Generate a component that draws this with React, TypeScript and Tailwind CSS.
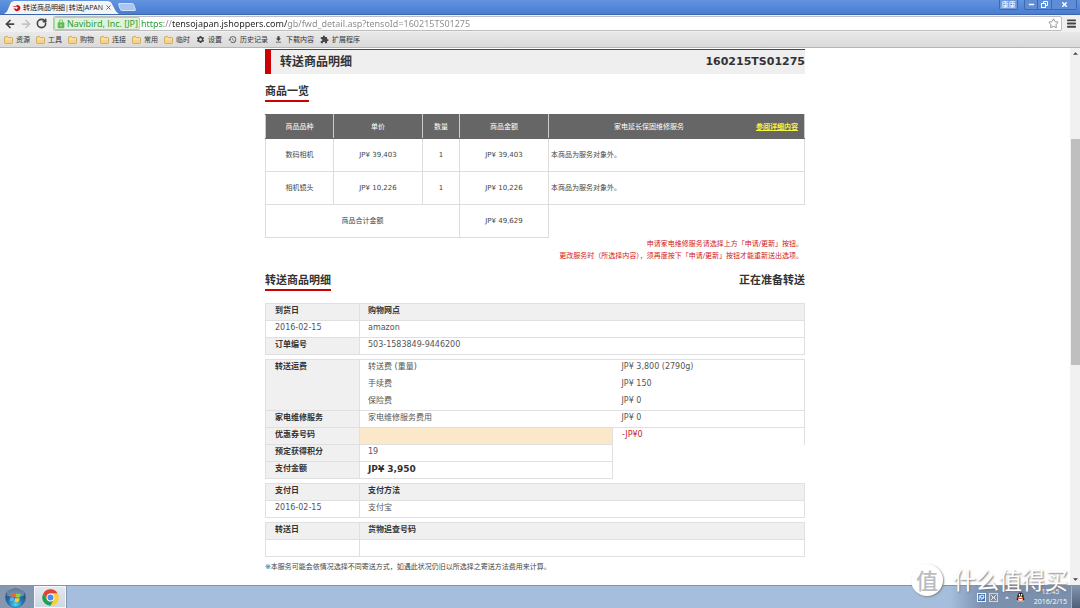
import React from "react";
import { ArrowLeft, ArrowRight, RotateCw, Star, Menu, X, Minus } from "lucide-react";
import { MdSettings, MdHistory, MdFileDownload, MdExtension, MdLock } from "react-icons/md";

const products = [
  { name: "数码相机", price: "JP¥ 39,403", count: "1", total: "JP¥ 39,403", note: "本商品为服务对象外。" },
  { name: "相机镜头", price: "JP¥ 10,226", count: "1", total: "JP¥ 10,226", note: "本商品为服务对象外。" },
];

function FolderIcon() {
  return (
    <svg viewBox="0 0 18 16" className="h-2 w-[9px]" aria-hidden="true">
      <path d="M1 3 Q1 1 3 1 H7 L9 3 H15 Q17 3 17 5 V13 Q17 15 15 15 H3 Q1 15 1 13 Z" fill="#f7d483" stroke="#c79a48" strokeWidth="1.4" />
      <path d="M2 6 H16" stroke="#fdf0c4" strokeWidth="1.6" />
    </svg>
  );
}

const bookmarks = [
  { label: "资源", icon: <FolderIcon /> },
  { label: "工具", icon: <FolderIcon /> },
  { label: "购物", icon: <FolderIcon /> },
  { label: "连接", icon: <FolderIcon /> },
  { label: "常用", icon: <FolderIcon /> },
  { label: "临时", icon: <FolderIcon /> },
  { label: "设置", icon: <MdSettings className="size-[9px] text-[#444]" /> },
  { label: "历史记录", icon: <MdHistory className="size-[9px] text-[#555]" /> },
  { label: "下载内容", icon: <MdFileDownload className="size-[9px] text-[#444]" /> },
  { label: "扩展程序", icon: <MdExtension className="size-[9px] text-[#444]" /> },
];

function SiteIcon() {
  return (
    <svg viewBox="0 0 24 20" className="h-2 w-[9px]" aria-hidden="true">
      <path d="M1 5 L10 5 Q13 0 19 3 Q25 8 21 14 Q16 21 9 17 L4 11 L10 11 L12 13 L16 9 L12 6 L8 8 Z" fill="#d3131b" />
    </svg>
  );
}

function RestoreIcon() {
  return (
    <svg viewBox="0 0 14 14" className="size-[7px]" fill="none" stroke="white" strokeWidth="2" aria-hidden="true">
      <path d="M5 4 V1 H13 V9 H10" />
      <rect x="1" y="5" width="8" height="8" />
    </svg>
  );
}

function TitleBar() {
  return (
    <header className="flex h-3.5 shrink-0 justify-between bg-linear-to-b from-[#6394df] to-[#4a7cd2]">
      <div className="flex pl-1">
        <div className="mt-px flex h-[13px] w-[115px] items-center bg-[#f4f4f4] pl-2 [clip-path:polygon(0_100%,3px_80%,7px_10%,10px_0,104px_0,107px_10%,112px_80%,100%_100%)]">
          <SiteIcon />
          <span className="ml-0.5 whitespace-nowrap text-[7px] leading-3 text-[#222]">转送商品明细|转送JAPAN</span>
          <button aria-label="关闭标签页" className="ml-0.5">
            <X className="size-[7px] text-[#555]" strokeWidth={3} />
          </button>
        </div>
        <button aria-label="新标签页" className="mt-[3px] h-2 w-4 skew-x-[20deg] rounded-xs border border-[#cfe0f7] bg-[#a9c7ee]" />
      </div>
      <div className="flex h-[10px] items-stretch gap-1.5 pr-[3px] text-white">
        <button className="w-[19px] rounded-b-xs border border-t-0 border-[#4068a8] bg-[#7099d8] text-center text-[7px] leading-2">康康</button>
        <div className="flex divide-x divide-[#4068a8] rounded-b-xs border border-t-0 border-[#4068a8] bg-[#5f8cd6]">
          <button aria-label="最小化" className="grid w-[13px] place-items-center"><Minus className="size-[7px]" strokeWidth={5} /></button>
          <button aria-label="还原" className="grid w-3.5 place-items-center"><RestoreIcon /></button>
          <button aria-label="关闭" className="grid w-6 place-items-center"><X className="size-[7px]" strokeWidth={5} /></button>
        </div>
      </div>
    </header>
  );
}

function Toolbar() {
  return (
    <div className="flex h-[18px] shrink-0 items-center border-t border-[#3b66ad] bg-[#f0f0f0] pr-[3px]">
      <nav className="flex items-center gap-1 pl-1" aria-label="导航">
        <button aria-label="后退"><ArrowLeft className="size-3 text-[#444]" strokeWidth={3.5} /></button>
        <button aria-label="前进"><ArrowRight className="size-3 text-[#c4c4c4]" strokeWidth={3.5} /></button>
        <button aria-label="重新加载"><RotateCw className="size-[11px] text-[#444]" strokeWidth={3.5} /></button>
      </nav>
      <div className="ml-1.5 flex h-[15px] grow items-center rounded-xs border border-[#bdbdbd] bg-white pr-0.5">
        <span className="flex h-[13px] shrink-0 items-center gap-px rounded-xs border border-[#a5d8a5] bg-[#dff2dc] px-px text-[9px] leading-3 text-[#1f9a2b]">
          <MdLock className="size-[10px] text-[#62b955]" />
          Navibird, Inc. [JP]
        </span>
        <input
          aria-label="地址"
          defaultValue="https://tensojapan.jshoppers.com/gb/fwd_detail.asp?tensoId=160215TS01275"
          className="ml-px h-[13px] min-w-0 grow bg-[linear-gradient(to_right,#1f9a2b_23px,#888_23px,#888_31px,#222_31px,#222_146px,#888_146px)] bg-clip-text font-['Noto_Sans',sans-serif] text-[9px] leading-3 text-transparent outline-none"
        />
        <button aria-label="收藏"><Star className="size-[11px] text-[#8a8a8a]" strokeWidth={2} /></button>
      </div>
      <button aria-label="菜单" className="ml-1"><Menu className="size-[11px] text-[#444]" strokeWidth={4} /></button>
    </div>
  );
}

function Bookmarks() {
  return (
    <nav aria-label="书签" className="flex h-4 shrink-0 items-center gap-1.5 border-b border-[#b5b5b5] bg-linear-to-b from-[#e9e9e9] to-[#dadada] pl-1">
      {bookmarks.map((b) => (
        <a key={b.label} href="#" className="flex items-center gap-[3px] text-[7px] leading-3 whitespace-nowrap text-[#333]">
          {b.icon}
          {b.label}
        </a>
      ))}
    </nav>
  );
}

function ProductTable() {
  const cell = "border border-[#ddd] p-0 text-center";
  const head = "border border-[#ccc] border-y-[#666] p-0 text-center font-normal";
  return (
    <table className="mt-3 w-full table-fixed border-collapse text-[7px] leading-3 text-[#444]">
      <colgroup>
        <col className="w-[68px]" />
        <col className="w-[89px]" />
        <col className="w-[37px]" />
        <col className="w-[89px]" />
        <col />
      </colgroup>
      <thead className="bg-[#666] text-white">
        <tr className="h-6">
          <th className={head}>商品品种</th>
          <th className={head}>单价</th>
          <th className={head}>数量</th>
          <th className={head}>商品金额</th>
          <th className={head}>
            <div className="flex items-center justify-between pr-1.5">
              <span className="pl-[65px]">家电延长保固维修服务</span>
              <a href="#" className="font-bold whitespace-nowrap text-[#f5f53c] underline">参阅详细内容</a>
            </div>
          </th>
        </tr>
      </thead>
      <tbody>
        {products.map((p) => (
          <tr key={p.name} className="h-[33px]">
            <td className={cell}>{p.name}</td>
            <td className={cell}>{p.price}</td>
            <td className={cell}>{p.count}</td>
            <td className={cell}>{p.total}</td>
            <td className="border border-[#ddd] p-0 pl-0.5">{p.note}</td>
          </tr>
        ))}
        <tr className="h-[33px]">
          <td colSpan={3} className={cell}>商品合计金额</td>
          <td className={cell}>JP¥ 49,629</td>
        </tr>
      </tbody>
    </table>
  );
}

const th = "border border-[#e0e0e0] bg-[#f0f0f0] p-0 pl-[9px] text-left align-top font-bold text-[#333]";
const thWide = "border border-[#e0e0e0] bg-[#f0f0f0] p-0 pl-2 text-left align-top font-bold text-[#333]";
const td = "border border-[#e0e0e0] p-0 pl-2 align-top";
const detail = "w-full table-fixed border-collapse text-[8px] leading-[14px] text-[#555]";

function PairTable({ heads, values }: { heads: string[]; values: string[] }) {
  return (
    <table className={detail}>
      <colgroup>
        <col className="w-[94px]" />
        <col />
      </colgroup>
      <thead>
        <tr className="h-[17px]">
          <th className={th}>{heads[0]}</th>
          <th className={thWide}>{heads[1]}</th>
        </tr>
      </thead>
      <tbody>
        <tr className="h-[17px]">
          <td className="border border-[#e0e0e0] p-0 pl-[9px] align-top">{values[0]}</td>
          <td className={td}>{values[1]}</td>
        </tr>
      </tbody>
    </table>
  );
}

function OrderTable() {
  return (
    <table className={detail}>
      <colgroup>
        <col className="w-[94px]" />
        <col />
      </colgroup>
      <tbody>
        <tr className="h-[17px]">
          <th className={th}>到货日</th>
          <th className={thWide}>购物网点</th>
        </tr>
        <tr className="h-[17px]">
          <td className="border border-[#e0e0e0] p-0 pl-[9px] align-top">2016-02-15</td>
          <td className={td}>amazon</td>
        </tr>
        <tr className="h-[17px]">
          <th className={th}>订单编号</th>
          <td className={td}>503-1583849-9446200</td>
        </tr>
      </tbody>
    </table>
  );
}

function FeeTable() {
  return (
    <table className={detail}>
      <colgroup>
        <col className="w-[94px]" />
        <col />
        <col className="w-[192px]" />
      </colgroup>
      <tbody>
        <tr className="h-[17px]">
          <th rowSpan={3} className={th}>转送运费</th>
          <td className="border-t border-[#e0e0e0] p-0 pl-2 align-top">转送费 (重量)</td>
          <td className="border-t border-r border-[#e0e0e0] p-0 pl-[9px] align-top">JP¥ 3,800 (2790g)</td>
        </tr>
        <tr className="h-[17px]">
          <td className="p-0 pl-2 align-top">手续费</td>
          <td className="border-r border-[#e0e0e0] p-0 pl-[9px] align-top">JP¥ 150</td>
        </tr>
        <tr className="h-[17px]">
          <td className="p-0 pl-2 align-top">保险费</td>
          <td className="border-r border-[#e0e0e0] p-0 pl-[9px] align-top">JP¥ 0</td>
        </tr>
        <tr className="h-[17px]">
          <th className={th}>家电维修服务</th>
          <td className="border-y border-[#e0e0e0] p-0 pl-2 align-top">家电维修服务费用</td>
          <td className="border-y border-r border-[#e0e0e0] p-0 pl-[9px] align-top">JP¥ 0</td>
        </tr>
        <tr className="h-[17px]">
          <th className={th}>优惠券号码</th>
          <td className="border border-[#e0e0e0] bg-[#fbe8c8] p-0" />
          <td className="border-r border-[#e0e0e0] p-0 pl-[9px] align-top text-[#c0242c]">-JP¥0</td>
        </tr>
        <tr className="h-[17px]">
          <th className={th}>预定获得积分</th>
          <td className={td}>19</td>
        </tr>
        <tr className="h-[17px]">
          <th className={th}>支付金额</th>
          <td className="border border-[#e0e0e0] p-0 pl-2 align-top text-[9px] font-bold text-[#333]">JP¥ 3,950</td>
        </tr>
      </tbody>
    </table>
  );
}

function Page() {
  return (
    <main className="mx-auto w-full max-w-[540px] pt-px font-['DejaVu_Sans','Noto_Sans_CJK_SC',sans-serif] text-[#333]">
      <div className="h-px bg-[#b8141c]" />
      <div className="flex h-6 items-center justify-between border-l-6 border-[#cc0000] bg-[#efefef] pl-[9px]">
        <h1 className="text-[12px] leading-4 font-bold">转送商品明细</h1>
        <span className="text-[11px] leading-4 font-bold">160215TS01275</span>
      </div>
      <h2 className="mt-2.5 w-fit border-b-2 border-[#cc0000] text-[11px] leading-4 font-bold">商品一览</h2>
      <ProductTable />
      <div className="pr-0.5 text-right text-[7px] leading-3 text-[#d01818]">
        <p>申请家电维修服务请选择上方「申请/更新」按钮。</p>
        <p>更改服务时（所选择内容），须再度按下「申请/更新」按钮才能重新送出选项。</p>
      </div>
      <div className="mt-[11px] flex items-start justify-between text-[11px] leading-4">
        <h2 className="border-b-2 border-[#cc0000] font-bold">转送商品明细</h2>
        <strong>正在准备转送</strong>
      </div>
      <div className="mt-3 flex flex-col gap-1">
        <OrderTable />
        <FeeTable />
        <PairTable heads={["支付日", "支付方法"]} values={["2016-02-15", "支付宝"]} />
        <PairTable heads={["转送日", "货物追查号码"]} values={["", ""]} />
      </div>
      <p className="mt-1 text-[7px] leading-3 text-[#444]">※本服务可能会依情况选择不同寄送方式，如遇此状况仍旧以所选择之寄送方法费用来计算。</p>
    </main>
  );
}

function ScrollBar() {
  return (
    <div className="flex w-[10px] shrink-0 flex-col bg-[#f1f1f1] pl-px">
      <button aria-label="向上滚动" className="grid h-[11px] place-items-center">
        <svg viewBox="0 0 8 4" className="h-[3px] w-[5px]"><path d="M0 4 L4 0 L8 4 Z" fill="#444" /></svg>
      </button>
      <div className="grow-80" />
      <div className="grow-226 bg-[#bfbfbf]" />
      <div className="grow-209" />
      <button aria-label="向下滚动" className="grid h-[11px] place-items-center">
        <svg viewBox="0 0 8 4" className="h-[3px] w-[5px]"><path d="M0 0 L4 4 L8 0 Z" fill="#444" /></svg>
      </button>
    </div>
  );
}

function StartOrb() {
  return (
    <svg viewBox="0 0 40 40" className="size-[21px]" aria-hidden="true">
      <defs>
        <radialGradient id="orb" cx="50%" cy="85%" r="75%">
          <stop offset="0" stopColor="#4fd3f2" />
          <stop offset="0.5" stopColor="#1f74b0" />
          <stop offset="1" stopColor="#254a74" />
        </radialGradient>
      </defs>
      <circle cx="20" cy="20" r="19" fill="url(#orb)" stroke="#35506f" />
      <path d="M3 16 A17 17 0 0 1 37 16 Q20 22 3 16 Z" fill="#ffffff" opacity="0.3" />
      <path d="M12 12 Q16 9.500 20 12 L18.500 19 Q14.500 17 10.500 19 Z" fill="#f0642c" />
      <path d="M21.500 12.500 Q26 14.500 30 12 L28.500 19 Q24 21.500 20 19.500 Z" fill="#9dcb3b" />
      <path d="M10 20.500 Q14 18.500 18 20.500 L16.500 27.500 Q12.500 25.500 8.500 27.500 Z" fill="#48b4ea" />
      <path d="M19.500 21 Q24 23 28 20.500 L26.500 27.500 Q22 30 18 28 Z" fill="#fccb33" />
    </svg>
  );
}

function ChromeIcon() {
  return (
    <svg viewBox="0 0 48 48" className="size-[17px]" aria-hidden="true">
      <circle cx="24" cy="24" r="23" fill="#fbcf3b" />
      <path d="M24 1 A23 23 0 0 1 44 12.500 H24 A11.500 11.500 0 0 0 14 29.750 L4 12.500 A23 23 0 0 1 24 1 Z" fill="#dc4437" />
      <path d="M4 12.500 L14 29.750 A11.500 11.500 0 0 0 34 29.750 L24 47 A23 23 0 0 1 4 12.500 Z" fill="#1ca05b" />
      <path d="M34 29.750 A11.500 11.500 0 0 0 24 12.500 H44 A23 23 0 0 1 24 47 Z" fill="#fbcf3b" />
      <circle cx="24" cy="24" r="11" fill="white" />
      <circle cx="24" cy="24" r="8.500" fill="#4788f1" />
    </svg>
  );
}

function Taskbar() {
  return (
    <footer className="flex h-[23px] shrink-0 items-stretch border-t border-[#8193ac] bg-linear-to-r from-[#a5bedd] from-88% to-[#7b90ad] to-91%">
      <div className="flex items-stretch bg-[#8496b0] pr-px pl-[5px]">
        <button aria-label="开始" className="mr-2 grid place-items-center"><StartOrb /></button>
        <button aria-label="Chrome" className="grid w-[32px] place-items-center border border-[#f4f7fb] bg-linear-to-b from-[#e3e8f0] to-[#cfd7e4]"><ChromeIcon /></button>
      </div>
      <div className="grow" />
      <div className="flex items-center gap-[3px] pr-1">
        <svg viewBox="0 0 20 20" className="size-[9px]" aria-hidden="true">
          <rect x="1" y="1" width="18" height="18" fill="#3d6fae" stroke="white" strokeWidth="2" />
          <path d="M5 5 V15 M8 5 H15 V11 H8 Z M8 15 L15 11" stroke="white" strokeWidth="2" fill="none" />
        </svg>
        <svg viewBox="0 0 20 20" className="size-[9px]" aria-hidden="true">
          <rect x="1" y="1" width="18" height="18" fill="#7f8b99" stroke="#d5dbe3" strokeWidth="2" />
          <path d="M4 4 L16 16 M16 4 L4 16 M7 10 H13" stroke="#e8ecf0" strokeWidth="2" />
        </svg>
        <svg viewBox="0 0 8 4" className="mx-1 h-[3px] w-1" aria-hidden="true"><path d="M0 4 L4 0 L8 4 Z" fill="white" /></svg>
        <svg viewBox="0 0 20 22" className="h-[10px] w-[9px]" aria-hidden="true">
          <path d="M3 12 Q3 1 10 1 Q17 1 17 12 L19 16 L16 18 H4 L1 16 Z" fill="#15151a" />
          <ellipse cx="10" cy="15" rx="5.500" ry="5" fill="white" />
          <ellipse cx="7.500" cy="6" rx="1.700" ry="2.500" fill="white" />
          <ellipse cx="12.500" cy="6" rx="1.700" ry="2.500" fill="white" />
          <path d="M3 11 Q10 15 17 11 V14 Q10 17 3 14 Z" fill="#e0201c" />
          <path d="M6 9 Q10 11.500 14 9 Q10 7.500 6 9 Z" fill="#f8a51b" />
          <path d="M3 19 H9 V22 H3 Z M11 19 H17 V22 H11 Z" fill="#f8a51b" />
        </svg>
        <div className="ml-1.5 text-center text-[7px] leading-[10px] text-white">
          <div>12:45</div>
          <div>2016/2/15</div>
        </div>
      </div>
      <button aria-label="显示桌面" className="w-[9px] border-l border-[#9fb0c8] bg-linear-to-b from-[#8496ae] to-[#4d6079]" />
    </footer>
  );
}

function Watermark() {
  return (
    <div className="pointer-events-none absolute right-3 bottom-3 flex items-center gap-2.5 text-white [text-shadow:1px_1px_2px_#777]">
      <span className="grid size-8 place-items-center rounded-full bg-white text-[22px] leading-8 font-medium text-[#b9bdc2] shadow-[1px_1px_2px_#888] [text-shadow:none]">值</span>
      <span className="text-[23px] leading-8 whitespace-nowrap">什么值得买</span>
    </div>
  );
}

export default function App() {
  return (
    <div className="relative flex min-h-screen flex-col overflow-hidden bg-white font-['Open_Sans','Noto_Sans_CJK_SC',sans-serif]">
      <TitleBar />
      <Toolbar />
      <Bookmarks />
      <div className="flex grow">
        <div className="min-w-0 grow">
          <Page />
        </div>
        <ScrollBar />
      </div>
      <Taskbar />
      <Watermark />
    </div>
  );
}
